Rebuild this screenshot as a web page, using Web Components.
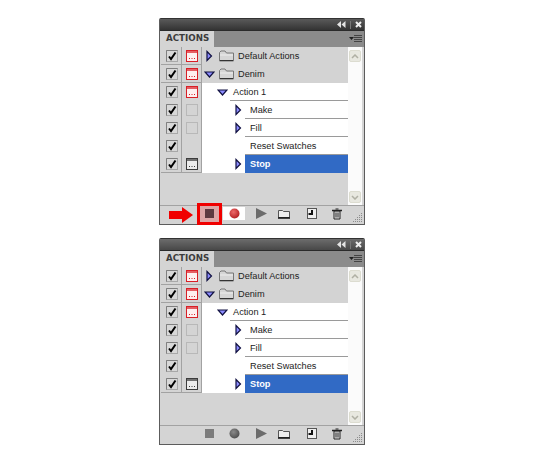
<!DOCTYPE html>
<html>
<head>
<meta charset="utf-8">
<title>Actions</title>
<style>
    html, body { margin: 0; background: #fff; }
    body {
        display: flex;
        flex-direction: column;
        align-items: center;
        gap: 13px;
        padding: 18px 16px 0 0;
        font-family: "Liberation Sans", sans-serif;
    }
</style>
</head>
<body>
<actions-panel annotated>
    <action-row level="set" toggle="red" ruled open="no" folder>Default Actions</action-row>
    <action-row level="set" toggle="red" ruled open="yes" folder>Denim</action-row>
    <action-row level="action" toggle="red" open="yes">Action 1</action-row>
    <action-row level="command" toggle="off" open="no">Make</action-row>
    <action-row level="command" toggle="off" open="no">Fill</action-row>
    <action-row level="command">Reset Swatches</action-row>
    <action-row level="command" toggle="dark" open="no" selected ruled>Stop</action-row>
</actions-panel>
<actions-panel>
    <action-row level="set" toggle="red" ruled open="no" folder>Default Actions</action-row>
    <action-row level="set" toggle="red" ruled open="yes" folder>Denim</action-row>
    <action-row level="action" toggle="red" open="yes">Action 1</action-row>
    <action-row level="command" toggle="off" open="no">Make</action-row>
    <action-row level="command" toggle="off" open="no">Fill</action-row>
    <action-row level="command">Reset Swatches</action-row>
    <action-row level="command" toggle="dark" open="no" selected ruled>Stop</action-row>
</actions-panel>
<script>
class ActionRow extends HTMLElement {
    constructor() {
        super();
        this.attachShadow({ mode: "open" });
    }
    getToggle() {
        const kind = this.getAttribute('toggle');
        if (!kind) return '';
        if (kind === 'off') {
            return `<svg width="12" height="12"><rect x=".5" y=".5" width="11" height="11" fill="#d4d4d4" stroke="#b8b8b8"/></svg>`;
        }
        const color = kind === 'red' ? '#d81f26' : '#3c3c3c';
        const fill = kind === 'red' ? '#fdf0f0' : '#ececec';
        return `<svg width="12" height="12">
            <rect x=".5" y=".5" width="11" height="11" fill="${fill}" stroke="${color}"/>
            <rect x="1" y="1" width="10" height="2" fill="${color}" opacity=".7"/>
            <path d="M3 8.5h1M5.5 8.5h1M8 8.5h1" stroke="${color}"/>
        </svg>`;
    }
    getTriangle() {
        const open = this.getAttribute('open');
        if (open === 'no') {
            return `<svg class="tri" width="7" height="12"><path d="M1 1.5L5.5 6L1 10.5Z" fill="#8c8cff" stroke="#101040" stroke-width="1.2"/></svg>`;
        }
        if (open === 'yes') {
            return `<svg class="tri" width="11" height="7"><path d="M1 1H10L5.5 6Z" fill="#8c8cff" stroke="#101040" stroke-width="1.2"/></svg>`;
        }
        return '';
    }
    getFolder() {
        if (!this.hasAttribute('folder')) return '';
        return `<svg class="folder" width="15" height="12">
            <path d="M.5 11V2.5L2 1H6L7.5 3H14.5V11Z" fill="#d6d6d6" stroke="#777"/>
            <path d="M1 5H14" stroke="#eee"/>
            <path d="M1 10.5H14" stroke="#333"/>
        </svg>`;
    }
    render() {
        this.shadowRoot.innerHTML = `
            <div class="check">
                <svg width="12" height="12">
                    <rect x=".5" y=".5" width="11" height="11" fill="#d8d8d8" stroke="#a8a8a8"/>
                    <path d="M.5 11.5V.5H11.5" fill="none" stroke="#808080"/>
                    <path d="M3 6.5L5 9L9.5 2.5" fill="none" stroke="#000" stroke-width="2"/>
                </svg>
            </div>
            <div class="toggle">${this.getToggle()}</div>
            <div class="item">
                <span class="twist">${this.getTriangle()}</span>
                ${this.getFolder()}
                <span class="label"><slot></slot></span>
            </div>
            ${this.getStyles()}
        `;
    }
    getStyles() {
        return `
        <style>
            :host {
                display: grid;
                grid-template-columns: 21px 20px 1fr;
                height: 18px;
                font-size: 9.2px;
                color: #222;
            }
            .check, .toggle {
                display: flex;
                align-items: center;
                justify-content: center;
                border-right: 1px solid #a2a2a2;
                box-sizing: border-box;
            }
            .check { padding-left: 2px; }
            :host([ruled]) .check, :host([ruled]) .toggle {
                border-bottom: 1px solid #a2a2a2;
            }
            .item {
                display: flex;
                align-items: center;
                background: #fff;
                box-sizing: border-box;
                min-width: 0;
                position: relative;
            }
            .twist {
                display: flex;
                align-items: center;
                justify-content: center;
                flex: none;
            }
            .folder { flex: none; margin-left: 3px; margin-right: 4px; }
            .label { white-space: nowrap; }

            /* sets */
            :host([level="set"]) .item { background: #d3d3d3; padding-left: 1px; }
            :host([level="set"]) .twist { width: 13px; }

            /* actions */
            :host([level="action"]) .item { padding-left: 14px; }
            :host([level="action"]) .twist { width: 12px; margin-right: 5px; }
            :host([level="action"]) .item::after {
                content: "";
                position: absolute;
                left: 28px;
                right: 0;
                bottom: 0;
                height: 1px;
                background: #9a9a9a;
            }

            /* commands */
            :host([level="command"]) .twist {
                width: 43px;
                padding: 0 3px 0 33px;
                box-sizing: border-box;
            }
            :host([level="command"]) .label {
                align-self: stretch;
                flex: 1;
                display: flex;
                align-items: center;
                padding-left: 5px;
                border-bottom: 1px solid #9a9a9a;
            }
            :host([selected]) .label {
                background: #316ac5;
                color: #fff;
                font-weight: bold;
                border-bottom-color: #316ac5;
            }
        </style>
        `;
    }
    connectedCallback() {
        this.render();
    }
}

class ActionsPanel extends HTMLElement {
    constructor() {
        super();
        this.attachShadow({ mode: "open" });
    }
    getTemplate() {
        const annotated = this.hasAttribute('annotated');
        const template = document.createElement('template');
        template.innerHTML = `
            <div class="titlebar">
                <svg width="9" height="7"><path d="M4 0V7L0 3.5ZM8.5 0V7L4.5 3.5Z" fill="#e4e4e4"/></svg>
                <i></i>
                <svg width="7" height="7"><path d="M1 1L6 6M6 1L1 6" stroke="#f0f0f0" stroke-width="2"/></svg>
            </div>
            <div class="tabs">
                <div class="tab">ACTIONS</div>
                <svg width="13" height="8"><path d="M0 2H5L2.5 5Z" fill="#222"/><path d="M5 .5H13M5 2.5H13M5 4.5H13M5 6.5H13" stroke="#444"/></svg>
            </div>
            <div class="body">
                <div class="list">
                    <slot></slot>
                    <div class="filler"></div>
                </div>
                <div class="scroll">
                    <div class="btn"><svg width="8" height="5"><path d="M1 4L4 1L7 4" fill="none" stroke="#b0b0a4" stroke-width="1.5"/></svg></div>
                    <div class="btn"><svg width="8" height="5"><path d="M1 1L4 4L7 1" fill="none" stroke="#b0b0a4" stroke-width="1.5"/></svg></div>
                </div>
            </div>
            <div class="footer">
                <span class="tool stop"><svg width="9" height="9"><rect width="9" height="9" fill="${annotated ? '#5e3a40' : '#7c7c7c'}"/></svg></span>
                <span class="tool rec"><svg width="11" height="11">
                    <defs><radialGradient id="ball" cx=".4" cy=".35" r=".7"><stop offset="0" stop-color="${annotated ? '#ee6a6a' : '#8a8a8a'}"/><stop offset="1" stop-color="${annotated ? '#b01c20' : '#4c4c4c'}"/></radialGradient></defs>
                    <circle cx="5.5" cy="5.5" r="5" fill="url(#ball)"/>
                </svg></span>
                <span class="tool play"><svg width="11" height="11"><path d="M0 0L11 5.5L0 11Z" fill="#6c6c6c"/></svg></span>
                <span class="tool folder"><svg width="12" height="10"><path d="M.5 8.5V1.5H4.5L5.5 2.5H11.5V8.5Z" fill="#eee" stroke="#555"/><path d="M0 9H12" stroke="#111" stroke-width="1.5"/></svg></span>
                <span class="tool newdoc"><svg width="10" height="11"><rect x=".5" y=".5" width="9" height="10" fill="#eee" stroke="#555"/><path d="M5 2V6H1.5" fill="none" stroke="#111" stroke-width="2"/></svg></span>
                <span class="tool trash"><svg width="10" height="12"><path d="M2 3V11H8V3Z" fill="#ddd" stroke="#222"/><path d="M0 2.5H10" stroke="#222" stroke-width="1.5"/><path d="M3.5 1H6.5M4 4.5V9.5M6 4.5V9.5" stroke="#222"/></svg></span>
                <svg class="grip" width="10" height="10"><path d="M8 1h1M6 3h1M8 3h1M4 5h1M6 5h1M8 5h1M2 7h1M4 7h1M6 7h1M8 7h1M0 9h1M2 9h1M4 9h1M6 9h1M8 9h1" stroke="#8c8c8c" transform="translate(0 -.5)"/></svg>
            </div>
            ${annotated ? `
            <svg class="arrow" width="24" height="16"><path d="M0 4H13V0L24 8L13 16V12H0Z" fill="#f00000"/></svg>
            <div class="mark"></div>` : ''}
            ${this.getStyles()}
        `;
        return template;
    }
    getStyles() {
        return `
        <style>
            :host {
                display: block;
                position: relative;
                width: 206px;
                height: 207px;
                box-sizing: border-box;
                border: 1px solid #5c5c5c;
                border-top-color: #333;
                border-radius: 2px 2px 0 0;
                background: #d4d4d4;
            }
            .titlebar {
                height: 11px;
                background: linear-gradient(#5a5a5a, #333);
                display: flex;
                align-items: center;
                justify-content: flex-end;
                gap: 4px;
                padding-right: 2px;
            }
            :host(:not([annotated])) .titlebar { background: linear-gradient(#6c6c6c, #484848); }
            .titlebar i { width: 1px; height: 8px; background: #777; }
            .tabs {
                height: 17px;
                box-sizing: border-box;
                background: #8b8b8b;
                border-top: 1px solid #2a2a2a;
                display: flex;
                align-items: stretch;
                justify-content: space-between;
            }
            .tabs svg { align-self: center; margin-right: 2px; }
            .tab {
                width: 54px;
                background: #d4d4d4;
                box-sizing: border-box;
                padding-left: 6px;
                font: bold 8.7px/15px "DejaVu Sans", sans-serif;
                color: #3c3c3c;
            }
            .body {
                display: flex;
                height: 158px;
                padding: 0 2px 0 1px;
                box-sizing: border-box;
            }
            .list { flex: 1; display: flex; flex-direction: column; min-width: 0; }
            .filler { flex: 1; }
            .scroll {
                width: 14px;
                flex: none;
                background: #fbfbfb;
                display: flex;
                flex-direction: column;
                justify-content: space-between;
                align-items: center;
                padding: 3px 0 2px;
                box-sizing: border-box;
            }
            .btn {
                width: 12px;
                height: 12px;
                box-sizing: border-box;
                background: #e8e8e0;
                border: 1px solid #dcdcd0;
                border-radius: 2px;
                display: flex;
                align-items: center;
                justify-content: center;
            }
            .footer {
                height: 19px;
                box-sizing: border-box;
                border-top: 1px solid #a2a2a2;
                padding-bottom: 3px;
                display: flex;
                align-items: center;
            }
            .tool { display: flex; align-items: center; justify-content: center; height: 13px; }
            .stop { width: 11px; margin-left: 44px; position: relative; z-index: 1; }
            .rec { width: 22px; margin-left: 8px; }
            :host([annotated]) .rec { background: #fff; }
            .play { width: 11px; margin-left: 11px; }
            .folder { width: 12px; margin-left: 11px; }
            .newdoc { width: 10px; margin-left: 17px; }
            .trash { width: 10px; margin-left: 15px; }
            .grip { margin-left: 11px; align-self: flex-end; margin-bottom: -2px; }
            .arrow { position: absolute; left: 9px; bottom: 1px; }
            .mark {
                position: absolute;
                left: 37px;
                bottom: -1px;
                width: 25px;
                height: 22px;
                box-sizing: border-box;
                border: 3px solid #f00000;
                background: rgba(230, 120, 120, .5);
            }
        </style>
        `;
    }
    render() {
        this.shadowRoot.append(this.getTemplate().content.cloneNode(true));
    }
    connectedCallback() {
        this.render();
    }
}

customElements.define('action-row', ActionRow);
customElements.define('actions-panel', ActionsPanel);
</script>
</body>
</html>
